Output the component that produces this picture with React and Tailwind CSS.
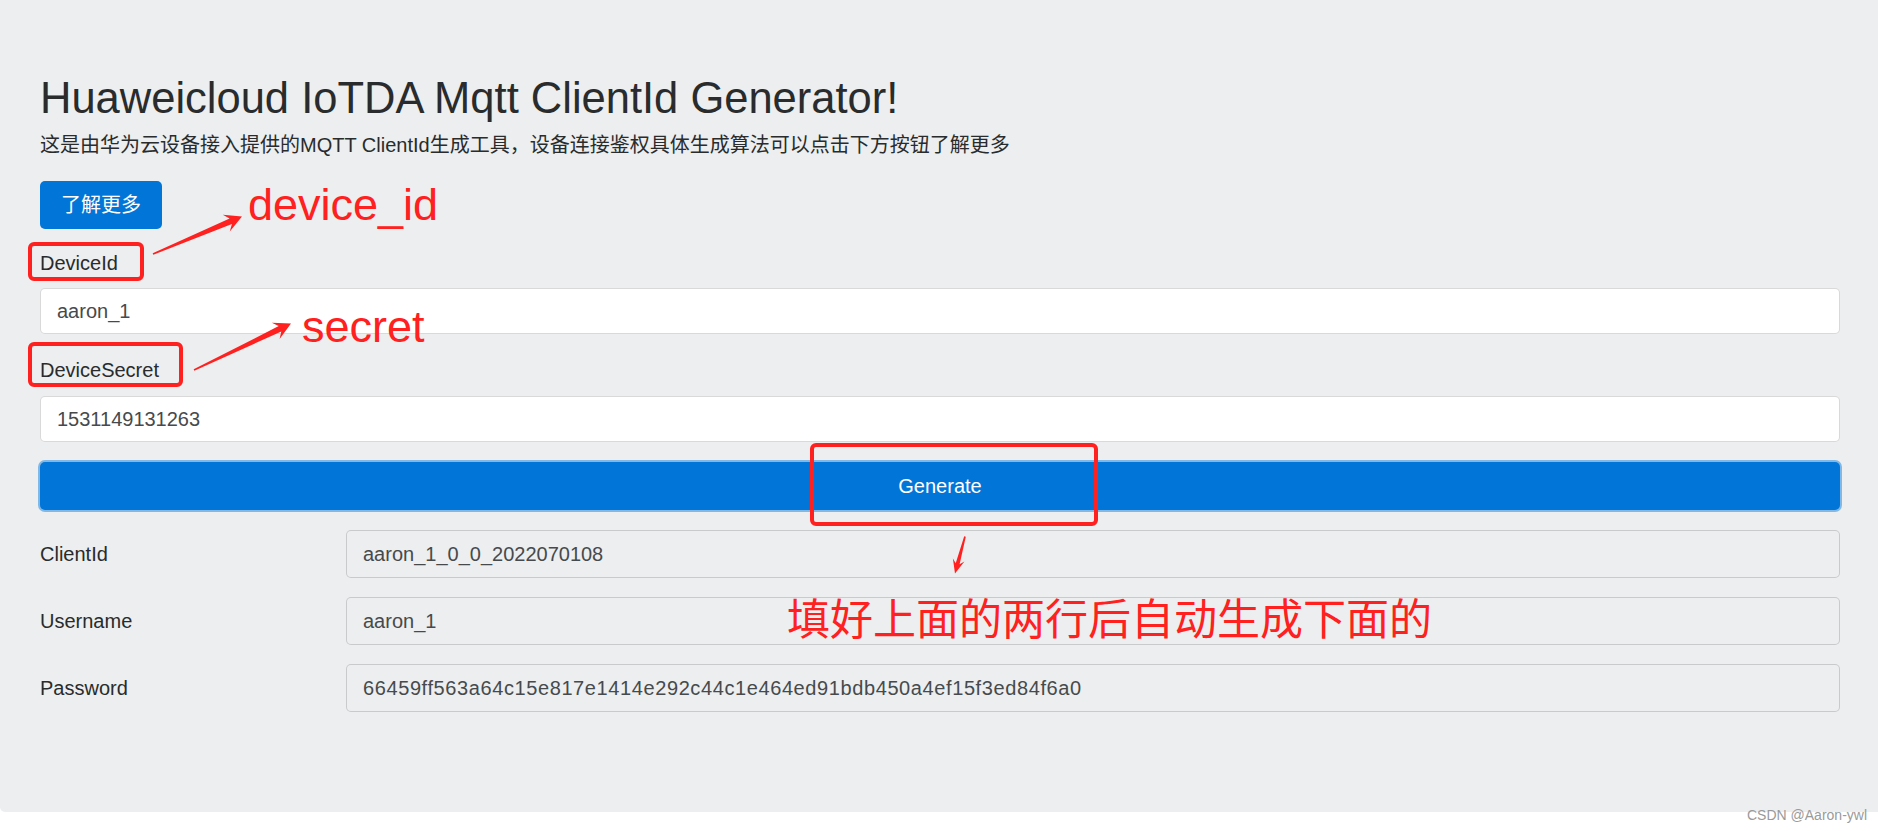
import React from 'react';

const RED = '#ff2020';

// tapered annotation arrow, returns polygon points
function arrowPoints(tail, tip, headLen, headHalf, neckHalf, tailHalf) {
  const dx = tip[0] - tail[0];
  const dy = tip[1] - tail[1];
  const len = Math.hypot(dx, dy);
  const ux = dx / len;
  const uy = dy / len;
  const nx = -uy;
  const ny = ux;
  const bx = tip[0] - ux * headLen;
  const by = tip[1] - uy * headLen;
  const kx = tip[0] - ux * headLen * 0.72;
  const ky = tip[1] - uy * headLen * 0.72;
  const pts = [
    [tail[0] + nx * tailHalf, tail[1] + ny * tailHalf],
    [kx + nx * neckHalf, ky + ny * neckHalf],
    [bx + nx * headHalf, by + ny * headHalf],
    tip,
    [bx - nx * headHalf, by - ny * headHalf],
    [kx - nx * neckHalf, ky - ny * neckHalf],
    [tail[0] - nx * tailHalf, tail[1] - ny * tailHalf],
  ];
  return pts.map((p) => `${p[0].toFixed(1)},${p[1].toFixed(1)}`).join(' ');
}

const arrows = [
  arrowPoints([153, 254], [242, 216.5], 17, 9, 3, 0.8),
  arrowPoints([194, 370], [291, 323.5], 17, 9, 3, 0.8),
  arrowPoints([965, 536.5], [955, 573.5], 14, 6, 2, 0.8),
];

const results = [
  { label: 'ClientId', value: 'aaron_1_0_0_2022070108', wide: false },
  { label: 'Username', value: 'aaron_1', wide: false },
  { label: 'Password', value: '66459ff563a64c15e817e1414e292c44c1e464ed91bdb450a4ef15f3ed84f6a0', wide: true },
];

export default function App() {
  return (
    <div className="relative w-[1878px] h-[831px] overflow-hidden bg-white text-[#292b2c] font-['Liberation_Sans','Noto_Sans_CJK_SC',sans-serif]">
      <div className="bg-[#eceeef] rounded-bl-[5px] pl-[40px] pr-[38px] pt-[72px] pb-[100px]">
        <h1 className="text-[43.5px] leading-[52px] font-normal">Huaweicloud IoTDA Mqtt ClientId Generator!</h1>
        <p className="mt-[6px] text-[20px] leading-[30px]">
          这是由华为云设备接入提供的MQTT ClientId生成工具，设备连接鉴权具体生成算法可以点击下方按钮了解更多
        </p>
        <button className="mt-[21px] h-[48px] px-[21px] rounded-[5px] bg-[#0275d8] text-white text-[20px] leading-[30px]">
          了解更多
        </button>

        <label className="block mt-[19px] text-[20px] leading-[30px]">DeviceId</label>
        <input
          defaultValue="aaron_1"
          className="block mt-[10px] w-full h-[46px] px-[16px] bg-white border border-black/15 rounded-[5px] text-[20px] text-[#464a4c] outline-none"
        />

        <label className="block mt-[21px] text-[20px] leading-[30px]">DeviceSecret</label>
        <input
          defaultValue="1531149131263"
          className="block mt-[11px] w-full h-[46px] px-[16px] bg-white border border-black/15 rounded-[5px] text-[20px] text-[#464a4c] outline-none"
        />

        <button className="block mt-[20px] w-full h-[48px] rounded-[5px] bg-[#0275d8] text-white text-[20px] shadow-[0_0_0_2px_rgba(2,117,216,0.45)]">
          Generate
        </button>

        <div className="mt-[20px] flex flex-col gap-[19px]">
          {results.map((r) => (
            <div key={r.label} className="flex items-center">
              <div className="w-[306px] text-[20px] leading-[30px]">{r.label}</div>
              <input
                readOnly
                value={r.value}
                className={
                  r.wide
                    ? 'flex-1 h-[48px] px-[16px] bg-[#eceeef] border border-black/15 rounded-[5px] text-[20px] tracking-[0.6px] text-[#464a4c] outline-none'
                    : 'flex-1 h-[48px] px-[16px] bg-[#eceeef] border border-black/15 rounded-[5px] text-[20px] text-[#464a4c] outline-none'
                }
              />
            </div>
          ))}
        </div>
      </div>

      {/* annotations drawn over the screenshot */}
      <div className="absolute left-[28px] top-[242px] w-[116px] h-[39px] border-4 border-[#ff2020] rounded-[6px]" />
      <div className="absolute left-[28px] top-[342px] w-[155px] h-[45px] border-4 border-[#ff2020] rounded-[6px]" />
      <div className="absolute left-[810px] top-[443px] w-[288px] h-[83px] border-4 border-[#ff2020] rounded-[6px]" />

      <svg className="absolute left-0 top-0 pointer-events-none" width="1878" height="831" viewBox="0 0 1878 831">
        {arrows.map((p, i) => (
          <polygon key={i} points={p} fill={RED} />
        ))}
      </svg>

      <div className="absolute left-[248px] top-[182px] text-[45px] leading-[45px] text-[#ff2020] font-['Liberation_Sans',sans-serif]">
        device_id
      </div>
      <div className="absolute left-[302px] top-[304px] text-[45px] leading-[45px] text-[#ff2020] font-['Liberation_Sans',sans-serif]">
        secret
      </div>
      <div className="absolute left-[787px] top-[595px] text-[43px] leading-[43px] text-[#ff2020] font-['Noto_Sans_CJK_SC',sans-serif]">
        填好上面的两行后自动生成下面的
      </div>

      <div className="absolute left-[1747px] top-[808px] text-[14px] leading-[14px] text-[#9a9a9a] font-['Liberation_Sans',sans-serif]">
        CSDN @Aaron-ywl
      </div>
    </div>
  );
}
